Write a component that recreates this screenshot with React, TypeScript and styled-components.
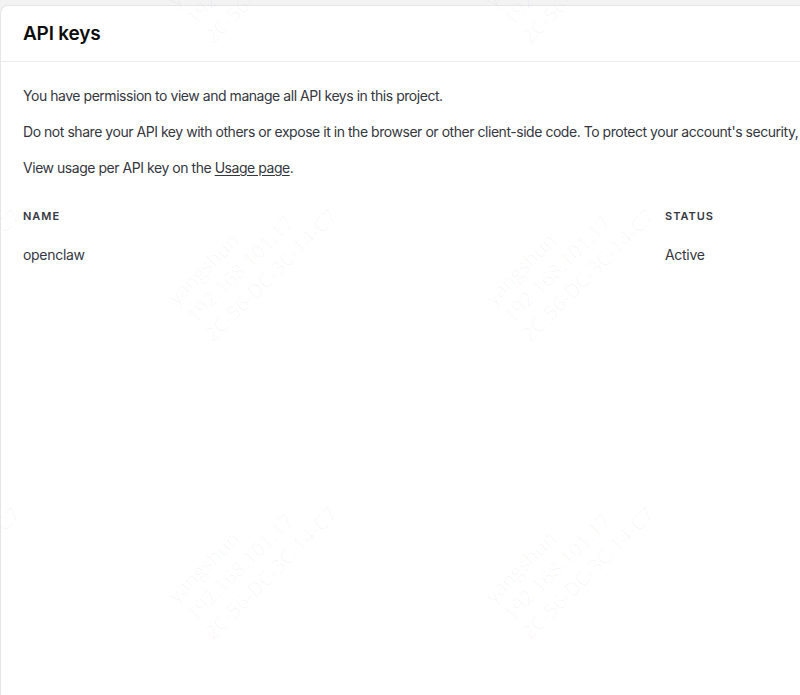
import React from 'react';
import styled, { createGlobalStyle } from 'styled-components';

const GlobalStyle = createGlobalStyle`
  html, body {
    margin: 0;
    padding: 0;
    height: 100%;
    overflow: hidden;
    background: #f3f3f3;
  }
  #root {
    height: 100%;
  }
`;

const WATERMARK_LINES = ['yangshun', '192.168.101.17', '2C-56-DC-3C-14-C7'];

type Column = { key: string; label: string; width: number };

const columns: Column[] = [
  { key: 'name', label: 'Name', width: 642 },
  { key: 'status', label: 'Status', width: 200 },
];

const keys = [{ name: 'openclaw', status: 'Active' }];

export default function App(): JSX.Element {
  return <Page>
    <GlobalStyle />
    <Card>
      <Header>
        <Title>API keys</Title>
      </Header>
      <Body>
        <Paragraph>You have permission to view and manage all API keys in this project.</Paragraph>
        <Paragraph>
          Do not share your API key with others or expose it in the browser or other client-side code. To protect your account's security, OpenAI may automatically disable any API key that has leaked publicly.
        </Paragraph>
        <Paragraph>
          View usage per API key on the <Link href="#">Usage page</Link>.
        </Paragraph>
        <Table>
          <HeadRow>
            { columns.map(c => <HeadCell key={ c.key } $width={ c.width }>{ c.label }</HeadCell>) }
          </HeadRow>
          { keys.map(k => <Row key={ k.name }>
            <Cell $width={ columns[0].width }>{ k.name }</Cell>
            <Cell $width={ columns[1].width }>{ k.status }</Cell>
          </Row>) }
        </Table>
      </Body>
    </Card>
    <Watermark>
      { Array.from({ length: 12 }).map((_, i) => <Tile key={ i }>
        <Stamp>
          { WATERMARK_LINES.map(l => <span key={ l }>{ l }</span>) }
        </Stamp>
      </Tile>) }
    </Watermark>
  </Page>;
}

const Page = styled.div`
  position: relative;
  height: 100%;
  padding-top: 5px;
  box-sizing: border-box;
  overflow: hidden;
  font-family: Inter, "Noto Sans", sans-serif;
`;

const Card = styled.main`
  width: 1400px;
  height: 100%;
  background: #ffffff;
  border-top: 1px solid #e6e6e6;
  border-left: 1px solid #e6e6e6;
  border-top-left-radius: 8px;
  box-sizing: border-box;
`;

const Header = styled.header`
  height: 55px;
  display: flex;
  align-items: center;
  padding: 0 22px;
  border-bottom: 1px solid #ececec;
`;

const Title = styled.h1`
  margin: 0;
  font-size: 19px;
  font-weight: 600;
  color: #0d0d0d;
  letter-spacing: -0.2px;
`;

const Body = styled.section`
  padding: 24px 22px;
  display: flex;
  flex-direction: column;
  gap: 16px;
`;

const Paragraph = styled.p`
  margin: 0;
  font-size: 14px;
  line-height: 20px;
  letter-spacing: -0.46px;
  color: #353740;
  white-space: nowrap;
`;

const Link = styled.a`
  color: inherit;
  text-decoration: underline;
  text-underline-offset: 2px;
`;

const Table = styled.div`
  margin-top: 12px;
  display: flex;
  flex-direction: column;
`;

const HeadRow = styled.div`
  display: flex;
  height: 20px;
  align-items: center;
`;

const Row = styled.div`
  display: flex;
  height: 43px;
  align-items: flex-end;
`;

const HeadCell = styled.div<{ $width: number }>`
  width: ${ p => p.$width }px;
  font-size: 11px;
  font-weight: 600;
  text-transform: uppercase;
  letter-spacing: 1px;
  color: #353740;
`;

const Cell = styled.div<{ $width: number }>`
  width: ${ p => p.$width }px;
  font-size: 14px;
  line-height: 28px;
  letter-spacing: -0.3px;
  color: #353740;
`;

const Watermark = styled.div`
  position: absolute;
  left: -223px;
  top: -190px;
  width: 1280px;
  height: 900px;
  display: grid;
  grid-template-columns: repeat(4, 317px);
  grid-template-rows: repeat(3, 298px);
  pointer-events: none;
`;

const Tile = styled.div`
  display: flex;
  align-items: center;
  justify-content: center;
`;

const Stamp = styled.div`
  display: flex;
  flex-direction: column;
  align-items: flex-start;
  transform: rotate(-45deg);
  font-family: "Open Sans", "Noto Sans", sans-serif;
  font-size: 20px;
  line-height: 26px;
  color: rgba(0, 0, 0, 0.03);
  white-space: nowrap;
`;
